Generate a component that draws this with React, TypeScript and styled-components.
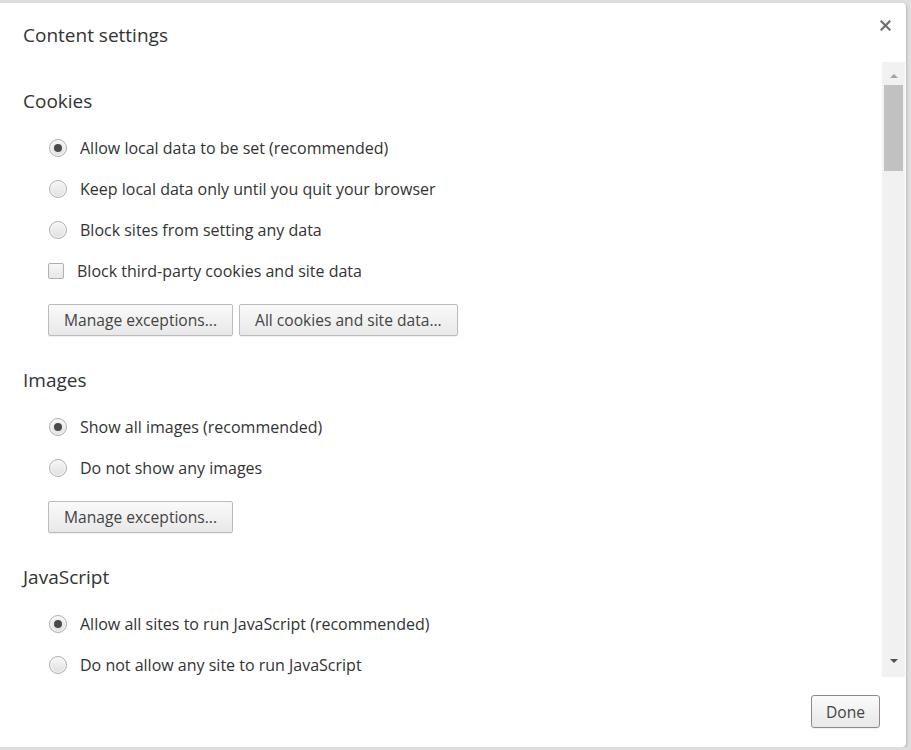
import React from "react";
import styled, { createGlobalStyle } from "styled-components";

const Global = createGlobalStyle`
  html, body { margin: 0; padding: 0; background: #dedede; }
  body { font-family: "Open Sans", "Noto Sans", sans-serif; color: #333; }
  * { box-sizing: border-box; }
`;

const Dialog = styled.div`
  width: 906px;
  height: 744px;
  margin-top: 3px;
  background: #fff;
  border-radius: 0 4px 4px 0;
  box-shadow: 1px 1px 2px rgba(0,0,0,0.18);
  display: flex;
  flex-direction: column;
`;

const Header = styled.div`
  height: 59px;
  display: flex;
  align-items: flex-start;
  justify-content: space-between;
  padding: 20px 15px 0 23px;
`;

const Title = styled.div`
  font-size: 19px;
  line-height: 24px;
  color: #333;
`;

const Close = styled.svg`
  width: 11px;
  height: 11px;
  margin-top: -3px;
`;

const Body = styled.div`
  height: 615px;
  display: flex;
`;

const Content = styled.div`
  flex: 1;
  overflow: hidden;
  padding: 27px 0 0 23px;
`;

const Section = styled.div`
  margin-bottom: 32px;
`;

const Heading = styled.div`
  font-size: 19px;
  line-height: 24px;
  color: #333;
  margin-bottom: 14.5px;
`;

const Row = styled.div`
  height: 41px;
  display: flex;
  align-items: center;
  font-size: 16px;
  color: #333;
`;

const Radio = styled.span<{ $checked?: boolean }>`
  width: 18px;
  height: 18px;
  border-radius: 50%;
  border: 1px solid #aeaeae;
  background: linear-gradient(#f7f7f7, #e0e0e0);
  box-shadow: inset 0 0 0 1px rgba(255,255,255,0.7);
  margin: 0 13px 0 26px;
  display: flex;
  align-items: center;
  justify-content: center;
  &::after {
    content: "";
    width: 8px;
    height: 8px;
    border-radius: 50%;
    background: #4a4a4a;
    display: ${(p) => (p.$checked ? "block" : "none")};
  }
`;

const Check = styled.span`
  width: 16px;
  height: 16px;
  border-radius: 2px;
  border: 1px solid #b0b0b0;
  background: linear-gradient(#f7f7f7, #e6e6e6);
  margin: 0 13px 0 25px;
`;

const Buttons = styled.div`
  display: flex;
  gap: 6px;
  margin: 12.5px 0 0 25px;
`;

const Button = styled.button<{ $focus?: boolean }>`
  height: 32px;
  padding: 0 15px;
  font-family: inherit;
  font-size: 15.6px;
  color: #444;
  border: 1px solid ${(p) => (p.$focus ? "#8a8a8a" : "#bcbcbc")};
  border-radius: 2px;
  background: linear-gradient(#fafafa, #e8e8e8);
  box-shadow: 0 1px 0 rgba(0,0,0,0.06);
`;

const Scrollbar = styled.div`
  width: 23px;
  background: #f1f1f1;
  display: flex;
  flex-direction: column;
  align-items: center;
  margin-right: 1px;
`;

const Arrow = styled.div<{ $down?: boolean }>`
  width: 0;
  height: 0;
  border-left: 4px solid transparent;
  border-right: 4px solid transparent;
  ${(p) =>
    p.$down
      ? "border-top: 4px solid #505050; margin-top: auto; margin-bottom: 14px;"
      : "border-bottom: 4px solid #a3a3a3; margin-top: 12px;"}
`;

const Thumb = styled.div`
  width: 19px;
  height: 86px;
  background: #c1c1c1;
  margin-top: 7px;
`;

const Footer = styled.div`
  flex: 1;
  display: flex;
  justify-content: flex-end;
  align-items: flex-start;
  padding: 18px 26px 0 0;
`;

const DoneButton = styled(Button)`
  height: 33px;
  padding: 0 14px;
  border-radius: 3px;
  color: #444;
`;

type Opt = { label: string; checked?: boolean; checkbox?: boolean };

const sections: { title: string; options: Opt[]; buttons: string[] }[] = [
  {
    title: "Cookies",
    options: [
      { label: "Allow local data to be set (recommended)", checked: true },
      { label: "Keep local data only until you quit your browser" },
      { label: "Block sites from setting any data" },
      { label: "Block third-party cookies and site data", checkbox: true },
    ],
    buttons: ["Manage exceptions...", "All cookies and site data..."],
  },
  {
    title: "Images",
    options: [
      { label: "Show all images (recommended)", checked: true },
      { label: "Do not show any images" },
    ],
    buttons: ["Manage exceptions..."],
  },
  {
    title: "JavaScript",
    options: [
      { label: "Allow all sites to run JavaScript (recommended)", checked: true },
      { label: "Do not allow any site to run JavaScript" },
    ],
    buttons: [],
  },
];

export default function App() {
  return (
    <>
      <Global />
      <Dialog>
        <Header>
          <Title>Content settings</Title>
          <Close viewBox="0 0 11 11">
            <path d="M1.5 1.5 L9.5 9.5 M9.5 1.5 L1.5 9.5" stroke="#6f6f6f" strokeWidth="2.2" strokeLinecap="square" />
          </Close>
        </Header>
        <Body>
          <Content>
            {sections.map((s) => (
              <Section key={s.title}>
                <Heading>{s.title}</Heading>
                {s.options.map((o) => (
                  <Row key={o.label}>
                    {o.checkbox ? <Check /> : <Radio $checked={o.checked} />}
                    {o.label}
                  </Row>
                ))}
                {s.buttons.length > 0 && (
                  <Buttons>
                    {s.buttons.map((b) => (
                      <Button key={b}>{b}</Button>
                    ))}
                  </Buttons>
                )}
              </Section>
            ))}
          </Content>
          <Scrollbar>
            <Arrow />
            <Thumb />
            <Arrow $down />
          </Scrollbar>
        </Body>
        <Footer>
          <DoneButton $focus>Done</DoneButton>
        </Footer>
      </Dialog>
    </>
  );
}
